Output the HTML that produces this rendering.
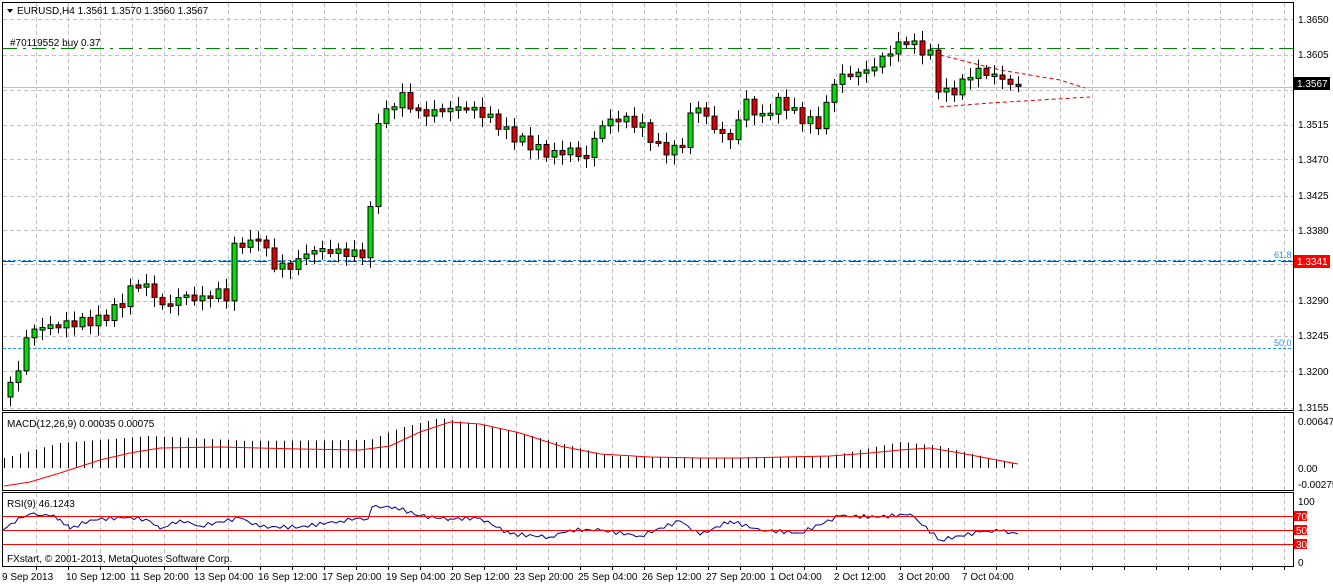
<!DOCTYPE html>
<html><head><meta charset="utf-8"><style>
body{margin:0;background:#fff;width:1333px;height:584px;overflow:hidden;font-family:"Liberation Sans",sans-serif}
svg{display:block}
text{font-family:"Liberation Sans",sans-serif;font-size:10px;fill:#000}
</style></head><body>
<svg id="s" width="1333" height="584" xmlns="http://www.w3.org/2000/svg">
<g id="grid"></g>
<rect x="2.5" y="2.5" width="1291" height="408" fill="none" stroke="#000"/>
<rect x="2.5" y="412.5" width="1291" height="78" fill="none" stroke="#000"/>
<rect x="2.5" y="492.5" width="1291" height="74" fill="none" stroke="#000"/>
<line x1="3" y1="87.5" x2="1293" y2="87.5" stroke="#c0c0c0"/>
<line x1="3" y1="48.5" x2="1293" y2="48.5" stroke="#008000" stroke-dasharray="14,6,3,6"/>
<line x1="3" y1="261.5" x2="1293" y2="261.5" stroke="#e00000" stroke-dasharray="12,6"/>
<line x1="3" y1="260.5" x2="1293" y2="260.5" stroke="#1e90ff" stroke-dasharray="3,2"/>
<line x1="3" y1="348.5" x2="1293" y2="348.5" stroke="#1e90ff" stroke-dasharray="3,2"/>
<text x="1274" y="258" style="fill:#1e90ff;font-size:9px">61.8</text>
<text x="1274" y="346" style="fill:#1e90ff;font-size:9px">50.0</text>
<polyline points="940,55 1000,70 1060,80 1085,88" fill="none" stroke="#e00000" stroke-dasharray="4,3"/>
<polyline points="940,107 990,103 1090,97" fill="none" stroke="#e00000" stroke-dasharray="4,3"/>
<g id="candles"></g>
<g id="macd"></g>
<g id="rsi"></g>
<line x1="3" y1="516.5" x2="1293" y2="516.5" stroke="#f00"/>
<line x1="3" y1="530.5" x2="1293" y2="530.5" stroke="#f00"/>
<line x1="3" y1="544.5" x2="1293" y2="544.5" stroke="#f00"/>
<path d="M7 9 L13 9 L10 13 Z" fill="#000"/>
<text x="17" y="14">EURUSD,H4  1.3561 1.3570 1.3560 1.3567</text>
<text x="10" y="46">#70119552 buy 0.37</text>
<text x="1298" y="23">1.3650</text>
<text x="1298" y="58">1.3605</text>
<text x="1298" y="128">1.3515</text>
<text x="1298" y="163">1.3470</text>
<text x="1298" y="199">1.3425</text>
<text x="1298" y="234">1.3380</text>
<text x="1298" y="304">1.3290</text>
<text x="1298" y="339">1.3245</text>
<text x="1298" y="375">1.3200</text>
<text x="1298" y="411">1.3155</text>
<rect x="1294" y="77" width="36" height="13" fill="#000"/>
<text x="1297" y="87" style="fill:#fff">1.3567</text>
<rect x="1294" y="255" width="36" height="13" fill="#f00"/>
<text x="1297" y="265" style="fill:#fff">1.3341</text>
<text x="7" y="427">MACD(12,26,9) 0.00035 0.00075</text>
<text x="1298" y="425">0.00647</text>
<text x="1298" y="472">0.00</text>
<text x="1298" y="488">-0.00275</text>
<text x="7" y="507">RSI(9) 46.1243</text>
<text x="1298" y="505">100</text>
<rect x="1294" y="511" width="13" height="10" fill="#f00"/><text x="1296" y="520" style="fill:#fff">70</text>
<rect x="1294" y="525" width="13" height="10" fill="#f00"/><text x="1296" y="534" style="fill:#fff">50</text>
<rect x="1294" y="539" width="13" height="10" fill="#f00"/><text x="1296" y="548" style="fill:#fff">30</text>
<text x="1298" y="566">0</text>
<text x="7" y="562">FXstart, © 2001-2013, MetaQuotes Software Corp.</text>
<text x="2" y="580">9 Sep 2013</text>
<text x="66" y="580">10 Sep 12:00</text>
<text x="130" y="580">11 Sep 20:00</text>
<text x="194" y="580">13 Sep 04:00</text>
<text x="258" y="580">16 Sep 12:00</text>
<text x="322" y="580">17 Sep 20:00</text>
<text x="386" y="580">19 Sep 04:00</text>
<text x="450" y="580">20 Sep 12:00</text>
<text x="514" y="580">23 Sep 20:00</text>
<text x="578" y="580">25 Sep 04:00</text>
<text x="642" y="580">26 Sep 12:00</text>
<text x="706" y="580">27 Sep 20:00</text>
<text x="770" y="580">1 Oct 04:00</text>
<text x="834" y="580">2 Oct 12:00</text>
<text x="898" y="580">3 Oct 20:00</text>
<text x="962" y="580">7 Oct 04:00</text>
</svg>
<script>
(function(){
var NS="http://www.w3.org/2000/svg";
function el(p,t,a){var e=document.createElementNS(NS,t);for(var k in a)e.setAttribute(k,a[k]);document.getElementById(p).appendChild(e);return e;}
var hy=[19,55,90,125,159,196,230,264,301,336,371,408];
hy.forEach(function(y){el("grid","line",{x1:3,x2:1293,y1:y+.5,y2:y+.5,stroke:"#c0c0c0","stroke-dasharray":"4,3"});});
for(var x=36;x<1293;x+=32){el("grid","line",{x1:x+.5,x2:x+.5,y1:3,y2:566,stroke:"#c0c0c0","stroke-dasharray":"4,3"});
 el("grid","line",{x1:x+.5,x2:x+.5,y1:566,y2:570,stroke:"#000"});}
var kp=[[10,385],[20,365],[28,330],[40,328],[60,325],[80,322],[100,320],[120,305],[130,290],[140,282],[150,290],[165,310],[180,295],[200,300],[215,292],[228,297],[235,240],[250,245],[260,233],[270,265],[290,267],[310,250],[340,252],[360,255],[368,248],[375,120],[385,115],[400,95],[420,115],[440,110],[470,108],[490,118],[510,135],[530,145],[550,155],[570,150],[585,160],[600,125],[620,118],[640,125],[660,150],[680,150],[695,100],[710,125],[730,140],[745,100],[760,120],[780,100],[800,118],[820,125],[835,78],[850,75],[870,70],[885,55],[905,40],[930,55],[940,95],[955,90],[975,70],[1000,78],[1018,88]];
function py(x){for(var i=1;i<kp.length;i++){if(x<=kp[i][0]){var a=kp[i-1],b=kp[i];return a[1]+(b[1]-a[1])*(x-a[0])/(b[0]-a[0]);}}return kp[kp.length-1][1];}
var prev=py(4);
for(var x=10;x<=1018;x+=8){
 var c=py(x)+Math.sin(x*0.37)*5, o=prev; prev=c;
 var up=c<o, t0=Math.min(o,c), b0=Math.max(o,c);
 if(b0-t0<2){t0-=1;b0+=1;}
 var hi=t0-3-Math.abs(Math.sin(x*1.3))*7, lo=b0+3+Math.abs(Math.cos(x*0.9))*7;
 el("candles","line",{x1:x+.5,x2:x+.5,y1:hi,y2:lo,stroke:"#000"});
 el("candles","rect",{x:x-2,y:t0,width:5,height:b0-t0,fill:up?"#00e000":"#e00000",stroke:"#000","stroke-width":1});
}
var mk=[[4,-10],[60,-25],[150,-32],[250,-27],[370,-28],[400,-40],[440,-50],[500,-40],[560,-25],[610,-12],[700,-10],[830,-12],[900,-26],[940,-22],[1018,-3]];
function mv(x){for(var i=1;i<mk.length;i++){if(x<=mk[i][0]){var a=mk[i-1],b=mk[i];return a[1]+(b[1]-a[1])*(x-a[0])/(b[0]-a[0]);}}return -3;}
var zero=468;
for(var x=4;x<=1018;x+=8){var v=mv(x);el("macd","line",{x1:x+.5,x2:x+.5,y1:zero,y2:zero+v,stroke:"#000"});}
var sk=[[4,18],[30,14],[60,5],[100,-8],[130,-15],[160,-20],[220,-21],[300,-19],[360,-18],[390,-22],[420,-36],[450,-46],[480,-44],[520,-35],[560,-22],[600,-14],[650,-11],[700,-10],[740,-10],[830,-12],[870,-15],[900,-18],[930,-20],[960,-15],[1018,-4]];
el("macd","polyline",{points:sk.map(function(p){return p[0]+","+(zero+p[1]);}).join(" "),fill:"none",stroke:"#f00"});
var rk=[[3,530],[20,518],[30,514],[50,516],[60,519],[70,529],[90,520],[130,517],[150,521],[160,529],[180,520],[200,526],[240,518],[260,527],[300,527],[340,521],[360,518],[368,519],[372,507],[395,507],[420,516],[450,519],[480,518],[510,534],[550,537],[570,530],[600,530],[640,536],[680,521],[700,535],[730,521],[760,530],[800,533],[840,516],[880,517],[910,514],[940,540],[980,532],[1000,531],[1018,534]];
var rp=[];
for(var i=0;i<rk.length;i++){
 if(i>0){var a=rk[i-1],b=rk[i];for(var xx=a[0]+4;xx<b[0];xx+=4){rp.push(xx+","+(a[1]+(b[1]-a[1])*(xx-a[0])/(b[0]-a[0])+Math.sin(xx*0.9)*2));}}
 rp.push(rk[i][0]+","+rk[i][1]);}
el("rsi","polyline",{points:rp.join(" "),fill:"none",stroke:"#00008b"});
})();
</script>
</body></html>
